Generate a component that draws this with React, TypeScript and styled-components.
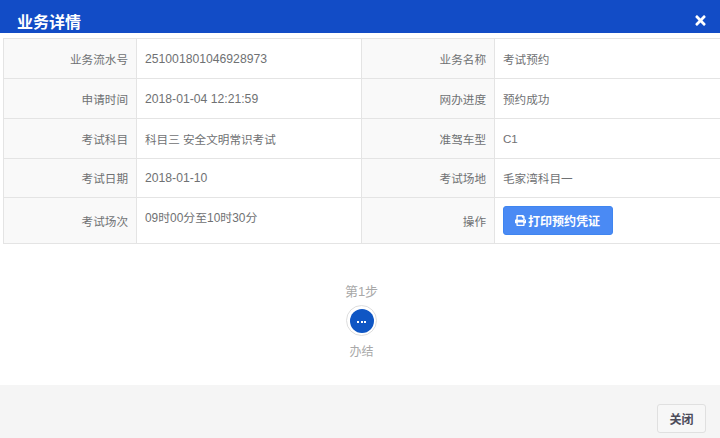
import { createGlobalStyle } from 'styled-components';
import styled from 'styled-components';
import { FaPrint, FaTimes } from 'react-icons/fa';

const FONT = '"Liberation Sans", "Noto Sans CJK SC", sans-serif';

const ROWS = [
  { label: '业务流水号', value: '251001801046928973', num: true, label2: '业务名称', value2: '考试预约' },
  { label: '申请时间', value: '2018-01-04 12:21:59', num: true, label2: '网办进度', value2: '预约成功' },
  { label: '考试科目', value: '科目三 安全文明常识考试', label2: '准驾车型', value2: 'C1' },
  { label: '考试日期', value: '2018-01-10', num: true, label2: '考试场地', value2: '毛家湾科目一' },
];

const GlobalStyle = createGlobalStyle`
  html, body {
    margin: 0;
    padding: 0;
    height: 438px;
    overflow: hidden;
    background: #fff;
    font-family: ${FONT};
  }
`;

const Dialog = styled.div`
  display: flex;
  flex-direction: column;
  width: 720px;
  height: 438px;
  overflow: hidden;
`;

const Header = styled.header`
  display: flex;
  align-items: flex-end;
  justify-content: space-between;
  height: 33px;
  flex: none;
  padding: 0 12px 0 17px;
  box-sizing: border-box;
  background: #124cc6;
  color: #fff;
`;

const Title = styled.h4`
  margin: 0;
  font-size: 16px;
  line-height: 20px;
  font-weight: 700;
`;

const CloseIcon = styled(FaTimes)`
  width: 15px;
  height: 15px;
  margin-bottom: 5px;
  color: #fff;
`;

const Body = styled.div`
  flex: 1;
  padding: 5px 0 0 3px;
`;

const InfoTable = styled.table`
  width: 718px;
  table-layout: fixed;
  border-collapse: collapse;
  font-size: 11.6px;
  color: #6f7173;

  tr:nth-child(4) td {
    height: 38px;
  }
`;

const Label = styled.td`
  height: 39px;
  padding: 0 8px 0 12px;
  border: 1px solid #e4e4e4;
  background: #f9f9f9;
  text-align: right;
`;

const Value = styled.td<{ $num?: boolean }>`
  padding: 0 8px;
  border: 1px solid #e4e4e4;
  font-size: ${(p) => (p.$num ? '12.2px' : 'inherit')};
`;

const SessionValue = styled(Value)`
  padding-bottom: 9px;
  font-size: 11.9px;
`;

const LastRow = styled.tr`
  height: 46px;
`;

const PrintButton = styled.button`
  display: flex;
  align-items: center;
  gap: 2px;
  width: 110px;
  height: 29px;
  margin: 0;
  padding: 0 0 0 11px;
  border: 1px solid #3f85f0;
  border-radius: 3px;
  background: #4a8af4;
  color: #fff;
  font: 700 12px ${FONT};
`;

const Steps = styled.section`
  display: flex;
  flex-direction: column;
  align-items: center;
  margin-top: 40px;
  font-size: 12px;
  color: #a8a8a8;
`;

const StepTitle = styled.div`
  font-size: 13px;
  line-height: 16px;
`;

const StepIcon = styled.div`
  display: flex;
  align-items: center;
  justify-content: center;
  width: 29px;
  height: 29px;
  margin: 5px 0 8px;
  border: 1px solid #dedede;
  border-radius: 50%;
`;

const StepDot = styled.div`
  display: flex;
  align-items: center;
  justify-content: center;
  gap: 1.5px;
  width: 24px;
  height: 24px;
  padding-top: 3px;
  box-sizing: border-box;
  border-radius: 50%;
  background: #0f56c4;
`;

const Pip = styled.i`
  width: 2px;
  height: 2px;
  background: #fff;
`;

const StepName = styled.div`
  line-height: 16px;
`;

const Footer = styled.footer`
  display: flex;
  align-items: flex-start;
  justify-content: flex-end;
  height: 53px;
  flex: none;
  padding: 19px 14px 0 0;
  box-sizing: border-box;
  background: #f5f5f5;
`;

const CloseButton = styled.button`
  width: 49px;
  height: 29px;
  padding: 0;
  border: 1px solid #e0e0e0;
  border-radius: 3px;
  background: #f7f7f7;
  color: #4c4c5a;
  font: 700 12px ${FONT};
`;

export default function App() {
  return (
    <Dialog>
      <GlobalStyle />
      <Header>
        <Title>业务详情</Title>
        <CloseIcon aria-label="close" />
      </Header>
      <Body>
        <InfoTable>
          <colgroup>
            <col style={{ width: 133 }} />
            <col style={{ width: 225 }} />
            <col style={{ width: 133 }} />
            <col />
          </colgroup>
          <tbody>
            {ROWS.map((row) => (
              <tr key={row.label}>
                <Label>{row.label}</Label>
                <Value $num={row.num}>{row.value}</Value>
                <Label>{row.label2}</Label>
                <Value>{row.value2}</Value>
              </tr>
            ))}
            <LastRow>
              <Label>考试场次</Label>
              <SessionValue>09时00分至10时30分</SessionValue>
              <Label>操作</Label>
              <Value>
                <PrintButton>
                  <FaPrint size={11} />
                  打印预约凭证
                </PrintButton>
              </Value>
            </LastRow>
          </tbody>
        </InfoTable>
        <Steps>
          <StepTitle>第1步</StepTitle>
          <StepIcon>
            <StepDot>
              <Pip />
              <Pip />
              <Pip />
            </StepDot>
          </StepIcon>
          <StepName>办结</StepName>
        </Steps>
      </Body>
      <Footer>
        <CloseButton>关闭</CloseButton>
      </Footer>
    </Dialog>
  );
}
